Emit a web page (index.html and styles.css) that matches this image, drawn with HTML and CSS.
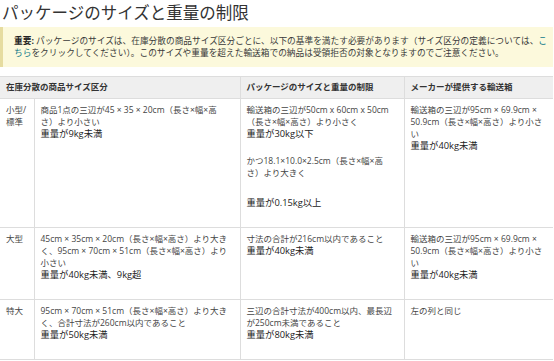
FILE: index.html
```html
<!DOCTYPE html>
<html lang="ja">
<head>
<meta charset="utf-8">
<title>パッケージのサイズと重量の制限</title>
<link rel="stylesheet" href="styles.css">
</head>
<body>
<div class="page">
  <h1 class="title">パッケージのサイズと重量の制限</h1>
  <div class="notice">
    <p><strong>重要:</strong> パッケージのサイズは、在庫分散の商品サイズ区分ごとに、以下の基準を満たす必要があります（サイズ区分の定義については、<a class="link" href="#">こちら</a>をクリックしてください）。このサイズや重量を超えた輸送箱での納品は受領拒否の対象となりますのでご注意ください。</p>
  </div>
  <table class="limits">
    <colgroup>
      <col class="c1"><col class="c2"><col class="c3"><col class="c4">
    </colgroup>
    <thead>
      <tr>
        <th colspan="2">在庫分散の商品サイズ区分</th>
        <th>パッケージのサイズと重量の制限</th>
        <th>メーカーが提供する輸送箱</th>
      </tr>
    </thead>
    <tbody>
      <tr>
        <td class="size">小型/標準</td>
        <td>
          <div>商品1点の三辺が45 × 35 × 20cm（長さ×幅×高<br>さ）より小さい</div>
          <div class="weight">重量が9kg未満</div>
        </td>
        <td>
          <div>輸送箱の三辺が50cm x 60cm x 50cm（長さ×幅×高さ）より小さく</div>
          <div class="weight">重量が30kg以下</div>
          <div class="para">かつ18.1×10.0×2.5cm（長さ×幅×高<br>さ）より大きく</div>
          <div class="weight para2">重量が0.15kg以上</div>
        </td>
        <td>
          <div>輸送箱の三辺が95cm × 69.9cm × 50.9cm（長さ×幅×高さ）より小さい</div>
          <div class="weight">重量が40kg未満</div>
        </td>
      </tr>
      <tr>
        <td class="size">大型</td>
        <td>
          <div>45cm × 35cm × 20cm（長さ×幅×高さ）より大きく、95cm × 70cm × 51cm（長さ×幅×高さ）より小さい</div>
          <div class="weight">重量が40kg未満、9kg超</div>
        </td>
        <td>
          <div>寸法の合計が216cm以内であること</div>
          <div class="weight">重量が40kg未満</div>
        </td>
        <td>
          <div>輸送箱の三辺が95cm × 69.9cm × 50.9cm（長さ×幅×高さ）より小さい</div>
          <div class="weight">重量が40kg未満</div>
        </td>
      </tr>
      <tr>
        <td class="size">特大</td>
        <td>
          <div>95cm × 70cm × 51cm（長さ×幅×高さ）より大きく、合計寸法が260cm以内であること</div>
          <div class="weight">重量が50kg未満</div>
        </td>
        <td>
          <div>三辺の合計寸法が400cm以内、最長辺が250cm未満であること</div>
          <div class="weight">重量が80kg未満</div>
        </td>
        <td>
          <div>左の列と同じ</div>
        </td>
      </tr>
    </tbody>
  </table>
</div>
</body>
</html>
```

FILE: styles.css
```css
* { box-sizing: border-box; }
html, body {
  margin: 0;
  padding: 0;
  background: #fff;
}
body {
  font-family: "Open Sans", "Noto Sans CJK JP", sans-serif;
  color: #333;
}
.page {
  width: 554px;
  padding: 2px 0 0 0;
}
.title {
  margin: 0 0 5px 2px;
  font-size: 16.5px;
  line-height: 20px;
  font-weight: normal;
  color: #333;
  font-family: "Noto Sans CJK JP", sans-serif;
}
.notice {
  background: #fcf9dc;
  border-left: 3px solid #e6dca0;
  padding: 8px 5px 8px 11px;
  margin: 0 1px 9px 0;
}
.notice p {
  margin: 0;
  font-size: 8.7px;
  line-height: 12px;
  color: #3a3a3a;
}
.notice strong {
  font-weight: bold;
  color: #222;
}
.link {
  color: #0f7a8a;
  text-decoration: none;
}
.limits {
  width: 553px;
  border-collapse: collapse;
  table-layout: fixed;
  font-size: 8.5px;
  line-height: 12px;
}
.c1 { width: 34px; }
.c2 { width: 206px; }
.c3 { width: 164px; }
.c4 { width: 149px; }
.limits th {
  background: #efefef;
  text-align: left;
  font-weight: bold;
  color: #333;
  padding: 4px 6px 5px 6px;
  border-top: 1px solid #ddd;
  border-bottom: 1px solid #ddd;
  border-left: 1px solid #ddd;
  height: 21px;
}
.limits th:first-child { border-left: none; }
.limits td {
  vertical-align: top;
  padding: 5px 6px 18px 6px;
  border-bottom: 1px solid #ddd;
  border-left: 1px solid #ddd;
  color: #444;
}
.limits td:first-child { border-left: none; }
.size { font-size: 8.5px; }
.weight {
  font-size: 9.3px;
  color: #222;
}
.para { margin-top: 15px; }
.para2 { margin-top: 18px; }
```
